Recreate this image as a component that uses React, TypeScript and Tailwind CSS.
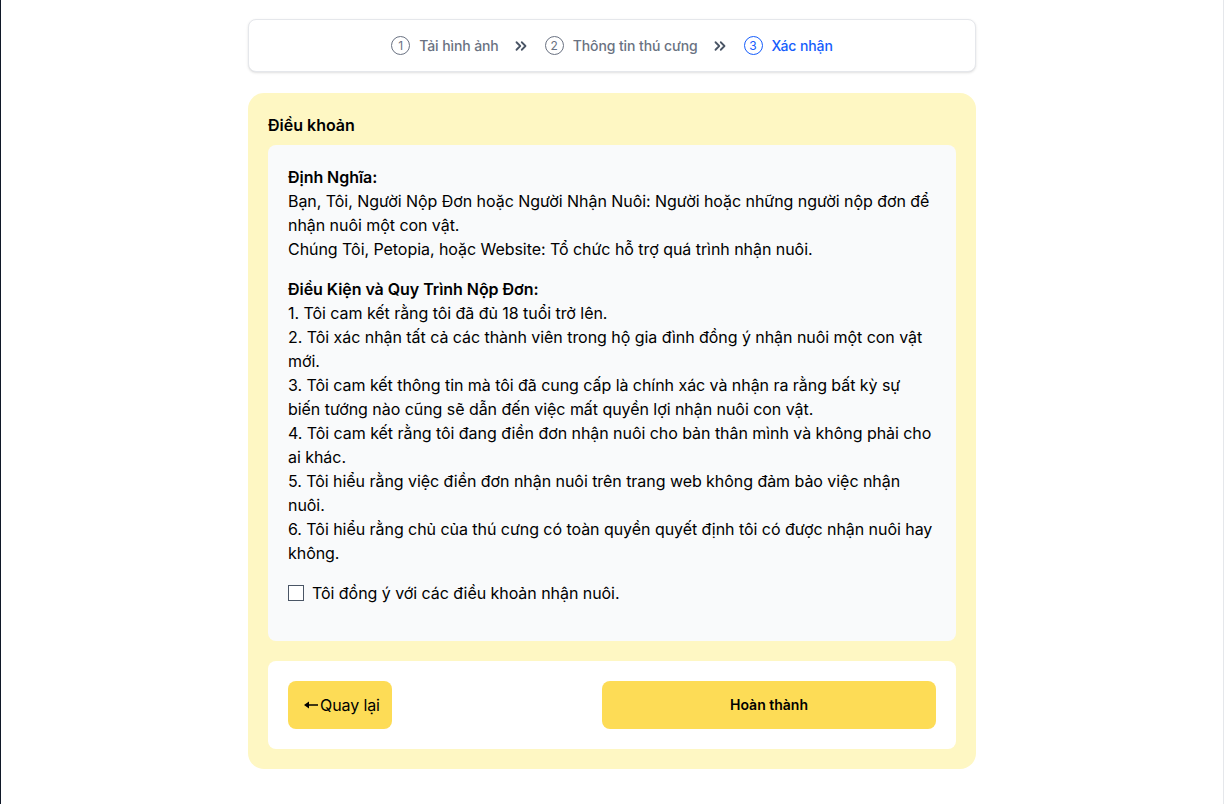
import { ChevronsRight } from 'lucide-react';

const steps = [
  { no: 1, label: 'Tải hình ảnh' },
  { no: 2, label: 'Thông tin thú cưng' },
  { no: 3, label: 'Xác nhận' },
];

const terms = [
  '1. Tôi cam kết rằng tôi đã đủ 18 tuổi trở lên.',
  '2. Tôi xác nhận tất cả các thành viên trong hộ gia đình đồng ý nhận nuôi một con vật mới.',
  '3. Tôi cam kết thông tin mà tôi đã cung cấp là chính xác và nhận ra rằng bất kỳ sự biến tướng nào cũng sẽ dẫn đến việc mất quyền lợi nhận nuôi con vật.',
  '4. Tôi cam kết rằng tôi đang điền đơn nhận nuôi cho bản thân mình và không phải cho ai khác.',
  '5. Tôi hiểu rằng việc điền đơn nhận nuôi trên trang web không đảm bảo việc nhận nuôi.',
  '6. Tôi hiểu rằng chủ của thú cưng có toàn quyền quyết định tôi có được nhận nuôi hay không.',
];

function Stepper({ current }: { current: number }) {
  return (
    <div className="flex h-[53px] items-center justify-center rounded-lg border border-gray-200 bg-white shadow-sm">
      {steps.map((s, i) => {
        const active = s.no === current;
        return (
          <div key={s.no} className="flex items-center">
            <div className={`flex items-center gap-[9px] ${active ? 'text-blue-600' : 'text-gray-500'}`}>
              <span
                className={`flex h-[19px] w-[19px] items-center justify-center rounded-full border text-[12px] ${
                  active ? 'border-blue-600' : 'border-gray-500'
                }`}
              >
                {s.no}
              </span>
              <span className="text-sm font-medium tracking-[-0.1px]">{s.label}</span>
            </div>
            {i < steps.length - 1 && (
              <ChevronsRight size={18} strokeWidth={2.4} className="ml-[13px] mr-[15px] text-gray-600" />
            )}
          </div>
        );
      })}
    </div>
  );
}

export default function App() {
  return (
    <div
      className="min-h-[804px] w-[1224px] border-l border-r border-l-gray-900 border-r-gray-200 bg-white text-black"
      style={{ fontFamily: 'Inter, "Noto Sans", sans-serif' }}
    >
      <div className="ml-[247px] w-[728px] pt-[19px]">
        <Stepper current={3} />

        <div className="mt-[21px] rounded-2xl bg-[#fef7c3] p-5">
          <h2 className="text-base font-semibold leading-6">Điều khoản</h2>

          <div className="mt-2 rounded-lg bg-gray-50 p-5 text-base leading-6 tracking-[-0.05px]">
            <div className="mb-4">
              <p className="font-semibold">Định Nghĩa:</p>
              <p>Bạn, Tôi, Người Nộp Đơn hoặc Người Nhận Nuôi: Người hoặc những người nộp đơn để nhận nuôi một con vật.</p>
              <p>Chúng Tôi, Petopia, hoặc Website: Tổ chức hỗ trợ quá trình nhận nuôi.</p>
            </div>
            <div>
              <p className="font-semibold">Điều Kiện và Quy Trình Nộp Đơn:</p>
              {terms.map((t) => (
                <p key={t}>{t}</p>
              ))}
            </div>
            <label className="mb-4 mt-4 flex items-center gap-2">
              <span className="h-4 w-4 border border-gray-600 bg-white" />
              <span>Tôi đồng ý với các điều khoản nhận nuôi.</span>
            </label>
          </div>

          <div className="mt-5 flex items-center justify-between rounded-lg bg-white p-5">
            <button className="flex h-12 w-[104px] items-center rounded-lg bg-[#fddc56] pl-4 text-base tracking-[-0.1px]">
              <svg width="14" height="8" viewBox="0 0 14 8" className="mr-[2px]">
                <path d="M0 4 L5 0.5 L5 3.3 L14 3.3 L14 4.7 L5 4.7 L5 7.5 Z" fill="currentColor" />
              </svg>
              Quay lại
            </button>
            <button className="h-12 w-[334px] rounded-lg bg-[#fddc56] text-sm font-semibold">Hoàn thành</button>
          </div>
        </div>
      </div>
    </div>
  );
}
